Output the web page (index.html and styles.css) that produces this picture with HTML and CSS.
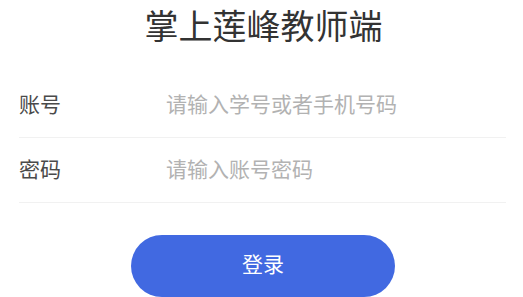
FILE: index.html
```html
<!DOCTYPE html>
<html lang="zh-CN">
<head>
<meta charset="utf-8">
<title>掌上莲峰教师端</title>
<link rel="stylesheet" href="styles.css">
</head>
<body>
<main class="page">
  <h1 class="title">掌上莲峰教师端</h1>
  <form class="form">
    <label class="row">
      <span class="label">账号</span>
      <input class="input" type="text" placeholder="请输入学号或者手机号码">
    </label>
    <label class="row">
      <span class="label">密码</span>
      <input class="input" type="password" placeholder="请输入账号密码">
    </label>
    <div class="actions">
      <button class="submit" type="button">登录</button>
    </div>
  </form>
</main>
</body>
</html>
```

FILE: styles.css
```css
* { box-sizing: border-box; }
html, body {
  margin: 0;
  padding: 0;
  background: #ffffff;
  font-family: "Noto Sans CJK SC", "Noto Sans", sans-serif;
}
.page {
  padding: 0 17px 0 19px;
}
.title {
  margin: 0;
  height: 73px;
  padding-left: 2px;
  font-size: 34px;
  line-height: 49px;
  font-weight: 400;
  color: #333333;
  text-align: center;
}
.form {
  display: flex;
  flex-direction: column;
}
.row {
  display: flex;
  align-items: center;
  height: 65px;
  border-bottom: 1px solid #f1f1f1;
}
.label {
  width: 147px;
  flex: none;
  font-size: 21px;
  color: #4a4a4a;
  line-height: 1.2;
  padding-bottom: 3px;
}
.input {
  flex: 1;
  min-width: 0;
  border: none;
  outline: none;
  padding: 0 0 3px;
  margin: 0;
  font-family: inherit;
  font-size: 21px;
  line-height: 1.2;
  color: #333333;
  background: transparent;
}
.input::placeholder {
  color: #b2b2b2;
}
.actions {
  display: flex;
  justify-content: center;
  padding-top: 32px;
  padding-left: 1px;
}
.submit {
  width: 264px;
  height: 62px;
  border: none;
  border-radius: 31px;
  background: #4169e1;
  color: #ffffff;
  font-family: inherit;
  font-size: 21px;
  line-height: 1.2;
  padding: 0 0 4px;
}
```
